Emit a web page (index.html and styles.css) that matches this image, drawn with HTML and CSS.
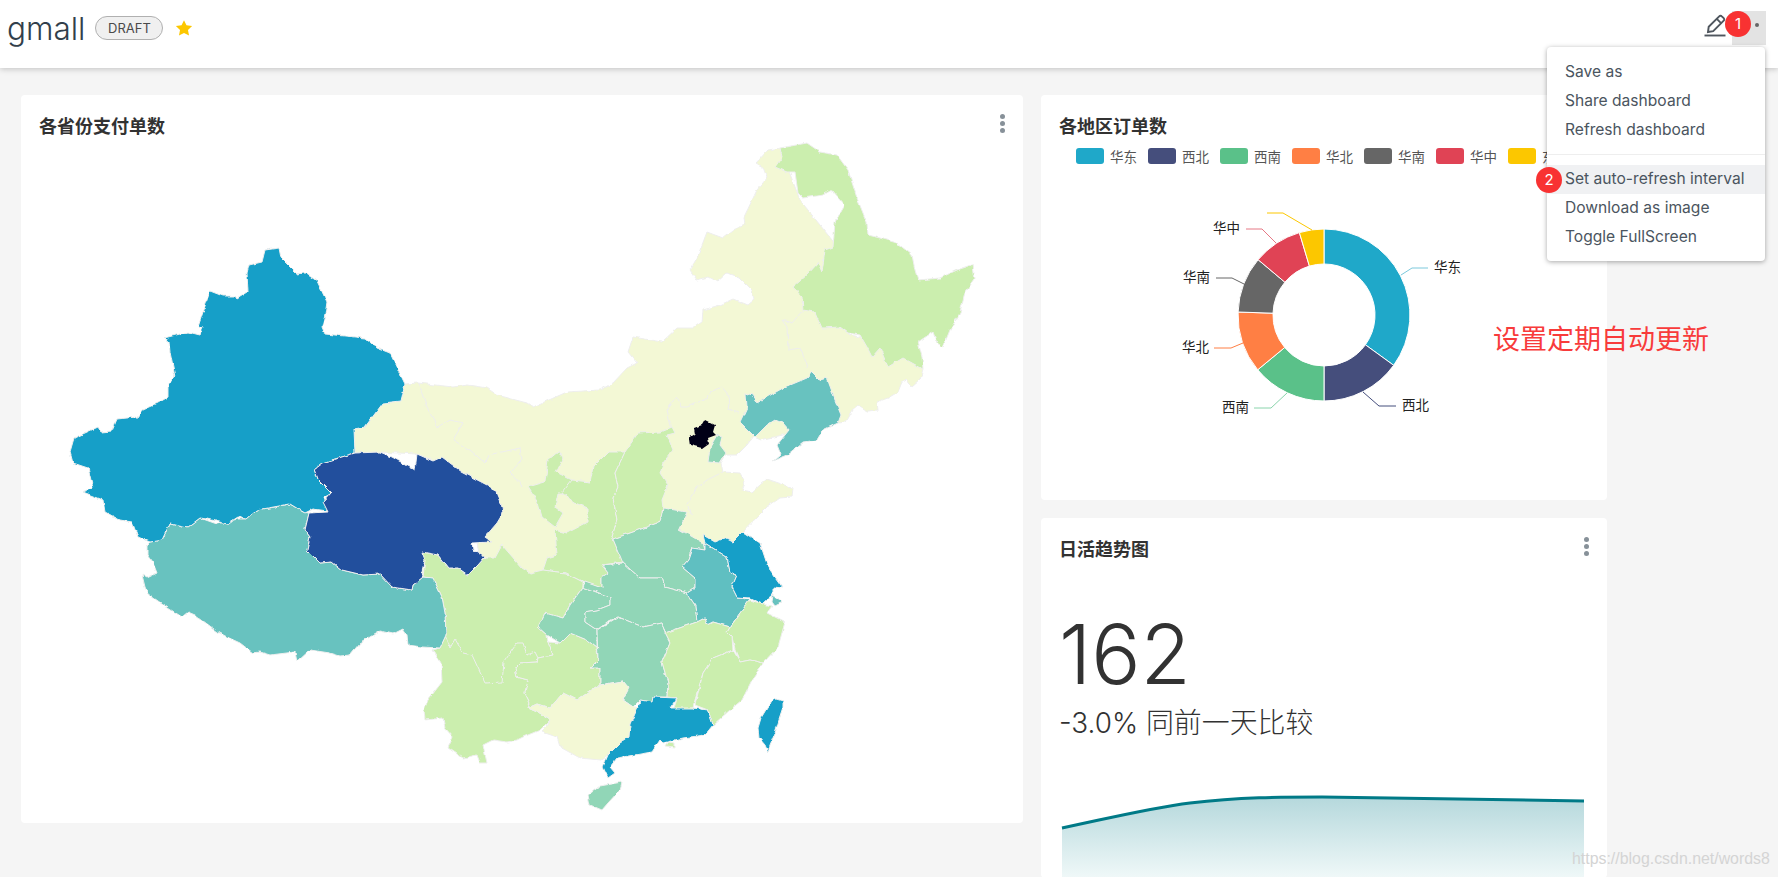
FILE: index.html
```html
<!DOCTYPE html>
<html lang="zh">
<head>
    <meta charset="UTF-8">
    <title>gmall</title>
    <link rel="stylesheet" href="styles.css">
</head>
<body>
    <header class="topbar">
        <div class="title-group">
            <span class="dash-name">gmall</span>
            <span class="draft">DRAFT</span>
            <svg class="star" viewBox="0 0 24 24"><path d="M12 1.5l3.3 6.9 7.5 1-5.5 5.2 1.4 7.5L12 18.500l-6.700 3.600 1.400-7.500L1.200 9.400l7.500-1z"/></svg>
        </div>
        <div class="actions">
            <svg class="pencil" viewBox="0 0 24 24">
                <path d="M5 18l.7-5.200L16.200 2.300c.8-.8 1.900-.8 2.600 0l1.900 1.900c.7.700.7 1.800 0 2.500L10.200 17.200z"/>
                <path d="M13.800 4.800l4.500 4.500"/>
                <path d="M1.500 21.500h21"/>
            </svg>
            <div class="more-btn">
                <svg viewBox="0 0 34 34"><circle cx="5" cy="14" r="2"/><circle cx="15" cy="14" r="2"/><circle cx="25" cy="14" r="2"/></svg>
            </div>
        </div>
        <span class="step step-one">1</span>
        <div class="menu">
            <div class="menu-item">Save as</div>
            <div class="menu-item">Share dashboard</div>
            <div class="menu-item">Refresh dashboard</div>
            <div class="menu-sep"></div>
            <div class="menu-item active">Set auto-refresh interval</div>
            <div class="menu-item">Download as image</div>
            <div class="menu-item">Toggle FullScreen</div>
            <span class="step step-two">2</span>
        </div>
    </header>

    <main class="grid">
        <section class="card map-card">
            <div class="card-head">
                <h2>各省份支付单数</h2>
                <span class="dots"><i></i><i></i><i></i></span>
            </div>
            <svg class="map" viewBox="21 141 1002 682">
                <defs>
                    <filter id="rough" x="-2%" y="-2%" width="104%" height="104%">
                        <feTurbulence type="fractalNoise" baseFrequency="0.14" numOctaves="2" seed="4"/>
                        <feDisplacementMap in="SourceGraphic" scale="3.500" xChannelSelector="R" yChannelSelector="G"/>
                    </filter>
                </defs>
                <g filter="url(#rough)">
                    <!-- north: gansu, inner mongolia, hebei, jilin, shandong -->
                    <polygon class="pale" points="405,384 418,383 453,387 468,385 487,388 497,395 527,403 533,407 567,392 600,390 613,383 627,368 637,363 628,352 633,337 662,342 677,328 693,328 702,322 703,310 720,305 733,299 748,305 754,300 752,290 740,278 727,273 717,282 708,277 697,280 690,270 697,258 707,232 723,238 733,230 745,225 744,217 757,190 767,178 763,167 756,163 768,150 780,148 800,200 840,250 810,300 850,335 900,345 923,369 920,380 912,387 907,380 902,382 898,392 888,398 877,402 878,410 867,411 858,405 852,410 845,422 838,423 760,440 753,437 747,445 737,455 726,455 721,463 723,472 740,473 745,482 742,490 752,492 767,479 793,488 792,497 780,498 767,507 757,517 743,532 733,542 700,545 660,540 600,580 540,580 480,560 470,500 462,472 417,454 380,452 355,453 354,429 365,427 383,403 401,401"/>
                    <polyline class="line" points="418,383 427,407 435,420 437,428 450,420 463,423 453,440 470,450 485,463 488,455 520,448 522,460 510,473 523,487"/>
                    <polyline class="line" points="740,413 728,410 730,397 722,387 710,392 708,398 687,407 682,407 677,397 667,410 672,430"/>
                    <polyline class="line" points="723,472 707,480 697,488 687,503 690,513 693,515"/>
                    <polyline class="line" points="808,367 800,348 788,350 787,327 782,320 792,323 803,310"/>
                    <polygon class="green" points="780,148 807,143 820,152 837,155 848,170 857,198 867,223 868,235 880,238 897,243 912,255 915,270 918,280 940,278 957,270 972,265 974,280 965,293 960,313 950,330 943,347 937,343 933,332 918,342 922,357 923,369 903,358 888,367 880,348 872,357 867,347 860,335 848,333 840,327 822,328 815,312 803,310 802,297 793,287 807,275 818,263 822,272 825,250 833,247 835,222 845,205 832,190 823,195 803,198 798,193 795,172 787,172 775,167 782,157"/>
                    <polygon class="green" points="528,487 545,482 548,460 559,451 563,458 556,472 572,480 568,493 558,493 555,507 563,513 555,527 542,517 538,503"/>
                    <polygon class="green" points="572,480 590,482 593,467 608,452 625,452 615,473 618,487 613,498 617,520 612,537 623,562 602,565 608,573 602,577 602,588 583,582 565,573 543,570 547,558 557,555 555,530 567,533 588,522 588,508 575,503 562,493"/>
                    <polygon class="green" points="625,452 638,433 660,432 672,427 675,433 667,435 673,450 663,463 660,473 668,485 662,500 663,508 660,522 633,532 613,539 612,537 617,520 613,498 618,487 615,473"/>
                    <polygon class="teal" points="812,372 820,380 827,378 835,400 841,415 838,423 823,430 817,440 803,442 787,455 782,457 773,462 781,455 777,445 789,430 783,423 775,420 767,425 755,437 740,422 747,407 746,393 752,395 757,403 767,397 783,388 807,378"/>
                    <polygon class="mint" points="717,435 722,437 720,445 726,453 720,463 708,462 710,447"/>
                    <polygon class="beijing" points="705,420 715,425 713,432 716,435 708,438 709,443 702,448 690,445 689,438 695,434 694,428 702,425"/>
                    <!-- sichuan + yunnan -->
                    <polygon class="green" points="422,552 438,555 448,568 458,568 468,575 478,565 485,558 495,558 502,545 522,568 530,573 543,570 565,573 583,582 583,587 570,605 563,618 545,613 538,627 547,635 548,642 553,655 538,658 537,662 520,663 515,668 517,677 528,680 525,693 530,703 528,708 537,712 550,720 540,730 523,737 517,740 507,742 493,740 483,745 487,763 480,763 477,755 463,758 448,748 453,737 445,728 443,718 425,720 424,710 428,700 442,682 441,663 433,650 440,648 446,635 445,613 442,597 433,578 423,577 425,560"/>
                    <polyline class="line" points="445,635 450,648 455,639 463,653 472,655 485,683 502,682 504,662 517,643 523,643 527,655 535,652 538,658"/>
                    <polygon class="green" points="515,668 517,677 528,680 525,693 530,703 528,708 537,704 550,708 563,693 577,700 600,685 600,668 590,668 598,660 597,648 587,640 570,633 560,643 548,642 553,655 538,658 537,662 520,663"/>
                    <polygon class="mint" points="583,587 610,597 610,605 597,610 585,612 585,622 597,630 597,648 587,640 570,633 560,643 547,635 538,627 545,613 563,618 570,605"/>
                    <polygon class="mint" points="663,508 687,512 679,529 703,543 705,550 692,548 688,560 682,567 695,578 695,588 687,593 665,587 662,578 640,578 623,563 613,539 633,532 660,522"/>
                    <polygon class="mint" points="623,563 602,565 608,573 602,577 602,588 585,582 583,587 610,597 610,605 597,610 585,612 585,622 597,630 607,622 618,617 643,627 662,623 665,633 697,622 695,605 687,593 665,587 662,578 640,578"/>
                    <polygon class="mint" points="597,630 618,617 643,627 662,623 665,633 670,643 662,662 668,683 667,697 653,697 652,702 640,700 633,707 623,700 628,688 623,681 600,685 600,668 590,668 598,660"/>
                    <polygon class="pale" points="528,708 537,704 550,708 563,693 577,700 600,685 623,681 629,688 623,700 633,707 638,707 629,737 620,743 608,755 600,760 580,758 560,747 557,737 542,732 550,720 537,712"/>
                    <polygon class="anhui" points="692,548 705,550 705,543 727,557 730,572 737,575 732,587 737,597 750,600 740,613 730,627 713,622 707,625 705,618 697,622 695,605 687,593 695,588 695,578 682,567 688,560"/>
                    <polygon class="blue" points="703,535 715,542 725,538 733,542 743,532 760,543 768,567 783,588 773,587 773,595 763,604 750,598 737,597 732,587 737,575 730,572 727,557 705,543"/>
                    <polygon class="teal" points="773,595 783,602 775,606 772,602"/>
                    <polygon class="green" points="750,600 763,604 772,606 767,613 785,622 778,647 763,663 750,660 740,662 735,650 732,637 727,632 740,613"/>
                    <polygon class="green" points="665,633 697,622 705,618 707,625 713,622 730,627 727,632 732,637 733,650 713,658 703,673 695,700 693,708 673,710 677,698 667,697 668,683 662,662 670,643"/>
                    <polygon class="green" points="733,650 740,662 750,660 763,663 752,680 742,700 730,710 713,725 708,710 695,705 703,673 713,658"/>
                    <polygon class="blue" points="653,697 677,698 670,708 693,708 708,710 713,725 705,735 683,738 663,743 660,740 652,752 617,758 610,767 615,773 608,778 603,767 608,755 620,743 629,737 630,725 638,707 640,700 652,702"/>
                    <polygon class="green" points="665,747 668,742 675,743 675,748"/>
                    <polygon class="mint" points="588,795 600,786 622,782 620,790 608,803 602,810 590,805"/>
                    <polygon class="blue" points="776,699 783,701 783,708 779,720 775,733 770,745 768,752 765,745 759,738 758,728 761,718 767,708 771,702"/>
                    <polygon class="teal" points="147,545 150,542 162,540 170,523 188,527 200,518 217,524 238,519 247,519 257,510 290,504 303,512 309,513 305,530 310,537 307,550 320,563 332,562 342,570 363,575 380,574 392,587 412,590 413,585 423,577 433,578 442,597 445,613 446,635 440,648 422,647 408,645 407,635 403,629 393,634 380,631 360,643 350,655 340,656 330,653 310,650 297,662 295,652 270,655 260,652 253,653 240,643 227,637 218,632 195,615 188,612 182,617 168,608 148,594 145,587 142,575 147,578 157,573 153,563 147,555"/>
                    <polygon class="blue" points="265,250 279,248 281,258 297,274 305,273 317,281 327,302 325,315 322,327 325,334 365,338 377,348 390,353 405,384 401,401 383,403 365,427 354,429 355,453 322,463 314,469 318,480 332,493 323,498 328,511 313,509 305,513 290,504 257,510 247,519 238,517 227,524 208,519 200,518 188,527 170,523 162,540 150,542 138,537 132,522 120,520 105,512 103,500 83,492 93,488 88,468 73,463 70,452 74,438 98,427 101,432 112,431 117,419 137,417 142,410 158,403 168,397 168,383 175,377 170,352 169,341 164,338 188,332 200,335 203,328 198,327 210,291 223,296 235,296 237,299 248,292 247,273 249,265 262,262"/>
                    <polygon class="navy" points="314,469 322,463 355,453 380,452 392,457 415,470 417,454 433,461 442,457 462,472 487,485 495,490 502,507 503,513 497,523 485,537 492,542 472,543 473,550 485,557 478,565 468,575 458,568 448,568 438,555 422,552 425,560 422,572 423,577 413,585 412,590 392,587 380,574 363,575 342,570 332,562 320,563 307,550 310,537 305,530 309,513 328,512 323,502 331,493 318,480"/>
                </g>
            </svg>
        </section>

        <div class="side">
            <section class="card pie-card">
                <div class="card-head">
                    <h2>各地区订单数</h2>
                </div>
                <div class="legend">
                    <div class="legend-item"><span class="swatch c1"></span>华东</div>
                    <div class="legend-item"><span class="swatch c2"></span>西北</div>
                    <div class="legend-item"><span class="swatch c3"></span>西南</div>
                    <div class="legend-item"><span class="swatch c4"></span>华北</div>
                    <div class="legend-item"><span class="swatch c5"></span>华南</div>
                    <div class="legend-item"><span class="swatch c6"></span>华中</div>
                    <div class="legend-item"><span class="swatch c7"></span>东北</div>
                </div>
                <svg class="pie" viewBox="1041 170 566 330">
                    <path fill="#1fa8c9" d="M1324 229A86 86 0 0 1 1393.700 365.300L1365.400 344.800A51 51 0 0 0 1324 264Z"/>
                    <path fill="#454e7c" d="M1393.700 365.300A86 86 0 0 1 1324 401V366A51 51 0 0 0 1365.400 344.800Z"/>
                    <path fill="#5ac189" d="M1324 401A86 86 0 0 1 1257.700 369.800L1284.700 347.500A51 51 0 0 0 1324 366Z"/>
                    <path fill="#ff7f44" d="M1257.700 369.800A86 86 0 0 1 1238.100 312L1273 313.200A51 51 0 0 0 1284.700 347.500Z"/>
                    <path fill="#666666" d="M1238.100 312A86 86 0 0 1 1258.100 259.700L1284.900 282.200A51 51 0 0 0 1273 313.200Z"/>
                    <path fill="#e04355" d="M1258.100 259.700A86 86 0 0 1 1299.400 232.600L1309.400 266.100A51 51 0 0 0 1284.900 282.200Z"/>
                    <path fill="#fcc700" d="M1299.400 232.600A86 86 0 0 1 1324 229V264A51 51 0 0 0 1309.400 266.100Z"/>
                    <polyline stroke="#7cc9dc" points="1401,275 1412,268 1428,268"/>
                    <polyline stroke="#454e7c" points="1363,392 1379,406 1396,406"/>
                    <polyline stroke="#8ad4ac" points="1287,393 1271,408 1254,408"/>
                    <polyline stroke="#ff7f44" points="1243,343 1231,348 1214,348"/>
                    <polyline stroke="#666666" points="1244,284 1232,278 1216,278"/>
                    <polyline stroke="#e67885" points="1276,243 1262,229 1246,229"/>
                    <polyline stroke="#fcc700" points="1312,230 1283,213 1267,213"/>
                    <text x="1434" y="272">华东</text>
                    <text x="1402" y="410">西北</text>
                    <text x="1222" y="412">西南</text>
                    <text x="1182" y="352">华北</text>
                    <text x="1183" y="282">华南</text>
                    <text x="1213" y="233">华中</text>
                </svg>
                <div class="note">设置定期自动更新</div>
            </section>

            <section class="card trend-card">
                <div class="card-head">
                    <h2>日活趋势图</h2>
                    <span class="dots"><i></i><i></i><i></i></span>
                </div>
                <div class="big-num">162</div>
                <div class="sub-num">-3.0% 同前一天比较</div>
                <svg class="spark" viewBox="1041 780 566 97">
                    <defs>
                        <linearGradient id="fade" x1="0" y1="0" x2="0" y2="1">
                            <stop offset="0" stop-color="#b5d8dc"/>
                            <stop offset="1" stop-color="#eff8f8"/>
                        </linearGradient>
                    </defs>
                    <path fill="url(#fade)" d="M1062 828C1110 818 1150 808 1190 803C1240 797 1280 797 1322 797C1380 798 1480 799 1584 801V877H1062Z"/>
                    <path class="spark-line" d="M1062 828C1110 818 1150 808 1190 803C1240 797 1280 797 1322 797C1380 798 1480 799 1584 801"/>
                </svg>
            </section>
        </div>
    </main>
    <div class="watermark">https://blog.csdn.net/words8</div>
</body>
</html>
```

FILE: styles.css
```css
* {
    box-sizing: border-box;
}

html, body {
    height: 877px;
    overflow: hidden;
}

body {
    margin: 0;
    background-color: #f5f5f5;
    font-family: Inter, "Noto Sans CJK SC", sans-serif;
    color: #323232;
}

.topbar {
    position: relative;
    z-index: 5;
    display: flex;
    justify-content: space-between;
    align-items: flex-start;
    height: 68px;
    padding: 11px 12px 0 7px;
    background-color: white;
    box-shadow: 0 1px 6px rgba(0, 0, 0, 0.22);
}

.title-group {
    display: flex;
    align-items: center;
    height: 34px;
}

.dash-name {
    font-size: 31.500px;
    font-weight: 300;
    color: #323f4b;
}

.draft {
    margin-left: 10px;
    width: 68px;
    height: 24px;
    border: 1px solid #b0b0b0;
    border-radius: 12px;
    background-color: #f0f0f0;
    text-align: center;
    font-size: 13px;
    line-height: 22px;
    color: #4a4a4a;
}

.star {
    width: 18px;
    height: 18px;
    margin-left: 12px;
    fill: #fcc700;
}

.actions {
    display: flex;
    align-items: flex-start;
}

.pencil {
    width: 24px;
    height: 26px;
    margin: 2px 5px 0 0;
    fill: none;
    stroke: #4f565e;
    stroke-width: 1.900;
}

.more-btn {
    width: 34px;
    height: 34px;
    background-color: #e3e3e3;
}

.more-btn svg {
    display: block;
    width: 34px;
    height: 34px;
    fill: #666;
}

.step {
    position: absolute;
    width: 26px;
    height: 26px;
    border-radius: 50%;
    background-color: #f83232;
    text-align: center;
    font-size: 15px;
    line-height: 26px;
    color: white;
}

.step-one {
    top: 11px;
    right: 27px;
}

.step-two {
    top: 120px;
    left: -11px;
}

.menu {
    position: absolute;
    top: 47px;
    right: 13px;
    width: 218px;
    height: 214px;
    padding-top: 11px;
    border-radius: 4px;
    background-color: white;
    box-shadow: 0 1px 5px rgba(0, 0, 0, 0.35);
}

.menu-item {
    height: 29px;
    padding-left: 18px;
    font-size: 15.600px;
    line-height: 27px;
    white-space: nowrap;
    color: #4b5560;
}

.menu-item.active {
    background-color: #f0f1f3;
}

.menu-sep {
    height: 1px;
    margin: 9px 0 10px;
    background-color: #eeeeee;
}

.grid {
    display: flex;
    gap: 18px;
    padding: 27px 0 0 21px;
}

.card {
    position: relative;
    border-radius: 4px;
    background-color: white;
}

.map-card {
    width: 1002px;
    height: 728px;
}

.side {
    display: flex;
    flex-direction: column;
    gap: 18px;
    width: 566px;
}

.pie-card {
    height: 405px;
}

.trend-card {
    height: 360px;
}

.card-head {
    display: flex;
    justify-content: space-between;
    align-items: center;
    height: 46px;
    padding: 18px 18px 0 18px;
}

.card-head h2 {
    margin: 0;
    font-size: 18px;
    font-weight: 700;
    line-height: 28px;
    color: #323232;
}

.dots {
    display: flex;
    flex-direction: column;
    gap: 2px;
    margin-top: -8px;
}

.dots i {
    width: 5px;
    height: 5px;
    border-radius: 50%;
    background-color: #879199;
}

.map {
    display: block;
    width: 1002px;
    height: 682px;
}

.map polygon {
    stroke: #eeeeee;
    stroke-width: 1;
    stroke-linejoin: round;
}

.map .line {
    fill: none;
    stroke: #eeeeee;
    stroke-width: 1;
}

.map .pale { fill: #f3f8d5; }
.map .green { fill: #cbeeae; }
.map .mint { fill: #91d6b7; }
.map .teal { fill: #67c2bf; }
.map .anhui { fill: #61bfc1; }
.map .blue { fill: #139fc8; }
.map .navy { fill: #214f9d; }
.map .beijing { fill: #060219; stroke: none; }

.legend {
    display: flex;
    height: 29px;
    padding: 6px 0 0 35px;
}

.legend-item {
    display: flex;
    flex-shrink: 0;
    align-items: center;
    width: 72px;
    height: 18px;
    font-size: 13.500px;
    color: #555;
}

.swatch {
    width: 28px;
    height: 16px;
    margin-right: 6px;
    border-radius: 3px;
}

.c1 { background-color: #1fa8c9; }
.c2 { background-color: #454e7c; }
.c3 { background-color: #5ac189; }
.c4 { background-color: #ff7f44; }
.c5 { background-color: #666666; }
.c6 { background-color: #e04355; }
.c7 { background-color: #fcc700; }

.pie {
    display: block;
    width: 566px;
    height: 330px;
}

.pie path {
    stroke: white;
    stroke-width: 1;
}

.pie polyline {
    fill: none;
    stroke-width: 1;
}

.pie text {
    font-size: 13.500px;
    fill: #222;
}

.note {
    position: absolute;
    top: 229px;
    left: 452px;
    font-size: 27px;
    line-height: 32px;
    white-space: nowrap;
    color: #f83b3b;
}

.big-num {
    margin: 44px 0 0 18px;
    font-size: 82px;
    font-weight: 300;
    line-height: 94px;
    color: #323232;
}

.sub-num {
    margin: 1px 0 0 18px;
    font-size: 27.900px;
    font-weight: 300;
    line-height: 40px;
    color: #323232;
}

.spark {
    position: absolute;
    top: 262px;
    left: 0;
    display: block;
    width: 566px;
    height: 97px;
}

.spark-line {
    fill: none;
    stroke: #007a87;
    stroke-width: 3;
}

.watermark {
    position: absolute;
    top: 849px;
    left: 1572px;
    font-family: "Liberation Sans", sans-serif;
    font-size: 15.900px;
    line-height: 20px;
    color: #d4d4d4;
}
```
